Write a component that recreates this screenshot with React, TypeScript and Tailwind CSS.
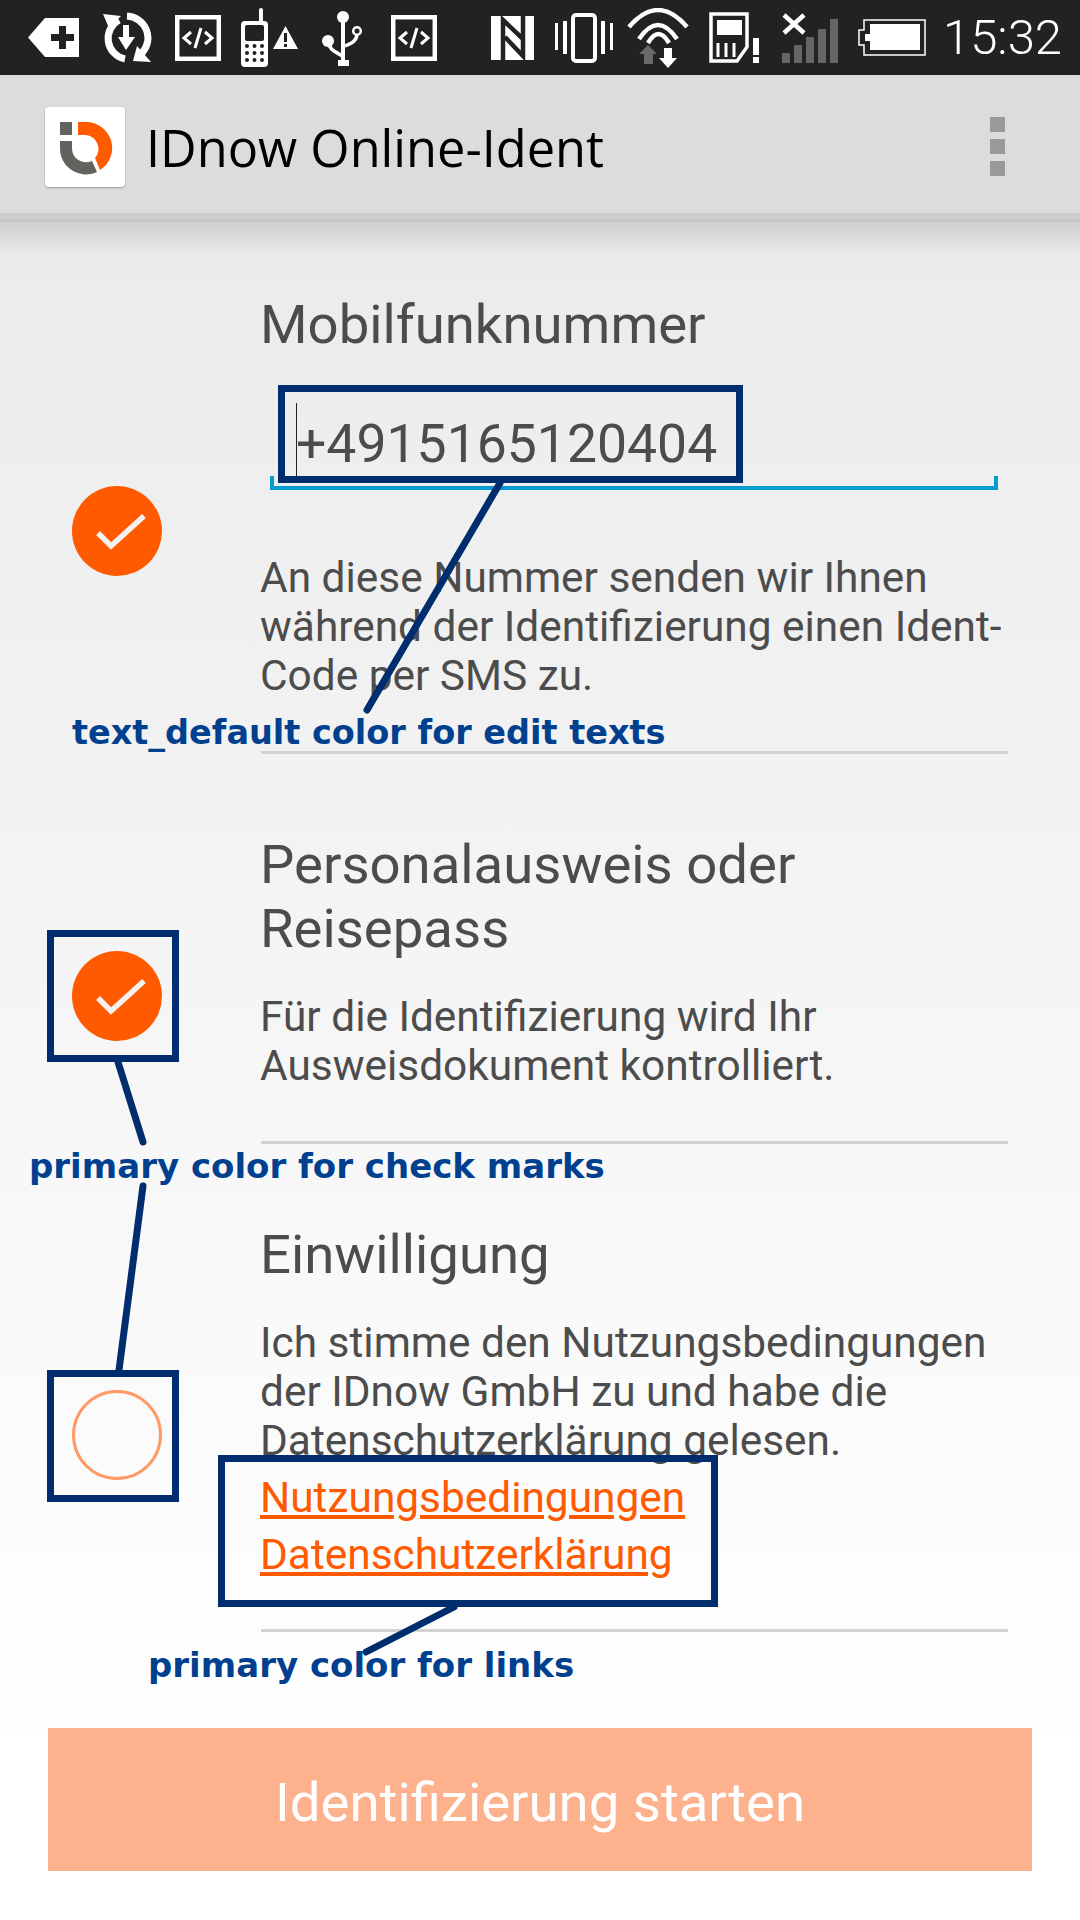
const CheckCircle = () => (
  <div className="w-[90px] h-[90px] rounded-full bg-[#ff5a00]">
    <svg width="90" height="90" viewBox="0 0 90 90" fill="none">
      <path d="M26 47 L39 60 L72 30" stroke="#f5f1ee" strokeWidth="5.5" />
    </svg>
  </div>
)

const CodeBox = ({ className }: { className: string }) => (
  <svg width="46" height="46" viewBox="0 0 46 46" fill="none" stroke="#fff" className={className}>
    <rect x="2.2" y="2.2" width="41.6" height="41.6" strokeWidth="4.5" />
    <path d="M16 17 L9 23 L16 29 M30 17 L37 23 L30 29 M26 13 L20 33" strokeWidth="3" />
  </svg>
)

function StatusBar() {
  return (
    <div className="h-[75px] bg-[#222222] flex items-center shrink-0">
      {/* battery saver tag */}
      <svg width="51" height="39" viewBox="0 0 51 39" className="ml-[28px]">
        <path d="M0 19.5 L17 0 H51 V39 H17 Z" fill="#fff" />
        <path d="M31 8 H38 V16 H46 V23 H38 V31 H31 V23 H23 V16 H31 Z" fill="#222" />
      </svg>
      {/* sync with download arrow */}
      <svg width="52" height="52" viewBox="0 0 52 52" fill="none" className="ml-[21px]">
        <path d="M19 8 A21 21 0 0 0 25 47" stroke="#fff" strokeWidth="7" />
        <path d="M27 4 A22 22 0 0 1 42 41" stroke="#fff" strokeWidth="7" />
        <path d="M3 2 L21 4 L9 16 Z M51 50 L33 49 L37 34 Z" fill="#fff" />
        <path d="M23 13 H29 V25 H35 L26 38 L18 25 H23 Z" fill="#fff" />
      </svg>
      <CodeBox className="ml-[23px]" />
      {/* phone with warning */}
      <svg width="58" height="59" viewBox="0 0 58 59" className="ml-[20px]">
        <rect x="18" y="0" width="4" height="15" rx="2" fill="#fff" />
        <rect x="0" y="13" width="27" height="46" rx="4" fill="#fff" />
        <rect x="4" y="17" width="19" height="16" rx="2" fill="#222" />
        {[38, 45, 52].map(y => [6, 13.5, 21].map(x => <circle key={`${x}-${y}`} cx={x} cy={y} r="2" fill="#222" />))}
        <path d="M32 41 L44.5 18 L57 41 Z" fill="#fff" />
        <rect x="43" y="25" width="3" height="9" fill="#222" />
        <rect x="43" y="36" width="3" height="3" fill="#222" />
      </svg>
      {/* usb */}
      <svg width="41" height="57" viewBox="0 0 41 57" fill="none" className="ml-[23px]">
        <circle cx="21" cy="8" r="6" fill="#fff" />
        <path d="M21 10 V52" stroke="#fff" strokeWidth="4" />
        <rect x="16" y="51" width="11" height="6" fill="#fff" />
        <circle cx="6" cy="32" r="6" fill="#fff" />
        <path d="M6 33 C8 42 15 43 20 47" stroke="#fff" strokeWidth="3.5" />
        <circle cx="35" cy="22" r="3.8" stroke="#fff" strokeWidth="2.5" />
        <path d="M35 26 C34 33 28 35 23 37" stroke="#fff" strokeWidth="3.5" />
      </svg>
      <CodeBox className="ml-[28px]" />
      {/* nfc */}
      <svg width="43" height="44" viewBox="0 0 43 44" className="ml-[54px]">
        <rect width="43" height="44" fill="#fff" />
        <path d="M12 44 V4 L32 23 M14 21 L32 40 V0" fill="none" stroke="#222" strokeWidth="4.5" />
      </svg>
      {/* vibrate */}
      <svg width="58" height="50" viewBox="0 0 58 50" className="ml-[21px]">
        <rect x="0" y="10" width="3" height="27" fill="#fff" />
        <rect x="8" y="8" width="4" height="33" fill="#fff" />
        <rect x="46" y="8" width="4" height="33" fill="#fff" />
        <rect x="55" y="10" width="3" height="27" fill="#fff" />
        <rect x="18" y="2" width="22" height="46" rx="3" fill="none" stroke="#fff" strokeWidth="4" />
      </svg>
      {/* wifi */}
      <svg width="63" height="60" viewBox="0 0 63 60" fill="none" className="ml-[14px]">
        <path d="M2 19 Q31 -15 60 19" stroke="#fff" strokeWidth="4.5" />
        <path d="M12 31 Q31 3 50 31" stroke="#fff" strokeWidth="4.5" />
        <path d="M21 35 Q31.5 17 42 35" stroke="#fff" strokeWidth="4.5" />
        <path d="M21 37 L30 46 H26 V56 H17 V46 H12 Z" fill="#6a6a6a" />
        <path d="M37 40 H45 V50 H50 L41 60 L32 50 H37 Z" fill="#fff" />
      </svg>
      {/* sim card */}
      <svg width="51" height="52" viewBox="0 0 51 52" fill="none" className="ml-[19px]">
        <path d="M2 2 H38 V35 L28 49 H2 Z" stroke="#fff" strokeWidth="3.5" />
        <rect x="8" y="8" width="25" height="15" fill="#fff" />
        <path d="M9 31 V45 M17 31 V45 M25 31 V45" stroke="#fff" strokeWidth="3" />
        <rect x="44" y="26" width="6" height="17" fill="#fff" />
        <rect x="44" y="45" width="6" height="6" fill="#fff" />
      </svg>
      {/* signal */}
      <svg width="56" height="50" viewBox="0 0 56 50" className="ml-[22px]">
        <path d="M2 2 L22 20 M22 2 L2 20" stroke="#fff" strokeWidth="4.5" />
        <rect x="0" y="40" width="8" height="10" fill="#666" />
        <rect x="12" y="32" width="8" height="18" fill="#666" />
        <rect x="24" y="24" width="8" height="26" fill="#666" />
        <rect x="36" y="16" width="8" height="34" fill="#666" />
        <rect x="48" y="6" width="8" height="44" fill="#666" />
      </svg>
      {/* battery */}
      <svg width="68" height="37" viewBox="0 0 68 37" fill="none" className="ml-[20px]">
        <path d="M6 1 H67 V36 H6 V26 H1 V11 H6 Z" stroke="#fff" strokeWidth="1.5" />
        <path d="M12 5 H62 V31 H12 V22 H7 V15 H12 Z" fill="#fff" />
      </svg>
      <span className="ml-[17px] text-[49px] leading-none text-white font-['Roboto',sans-serif] font-light">15:32</span>
    </div>
  )
}

function AppBar() {
  return (
    <div className="h-[138px] bg-[#dcdcdc] flex items-center shrink-0 pt-[6px] pl-[45px] pr-[75px]">
      <div className="w-[80px] h-[80px] bg-white rounded-[4px] shadow-[0_1px_2px_rgba(0,0,0,0.3)]">
        <svg width="80" height="80" viewBox="0 0 80 80">
          <rect x="15" y="15" width="12" height="13" fill="#62625e" />
          <path d="M15 34 H27 V41 A14 14 0 0 0 47 54 L52 65 A26 26 0 0 1 15 41 Z" fill="#62625e" />
          <path d="M33 15 H41 A26 26 0 0 1 55 63 L50 51 A14 14 0 0 0 41 28 H33 Z" fill="#ff5a00" />
        </svg>
      </div>
      <h1 className="ml-[21px] mt-[2px] text-[50.5px] leading-none text-black font-['Open_Sans',sans-serif]">IDnow Online-Ident</h1>
      <div className="ml-auto -mt-[2px] flex flex-col gap-[7px]">
        <div className="w-[15px] h-[15px] bg-[#999999]" />
        <div className="w-[15px] h-[15px] bg-[#999999]" />
        <div className="w-[15px] h-[15px] bg-[#999999]" />
      </div>
    </div>
  )
}

const Divider = () => <div className="h-[3px] bg-[#d2d2d2] w-[747px] ml-px" />

export default function App() {
  return (
    <div className="relative w-[1080px] h-[1920px] overflow-hidden bg-white text-[#4c4c4c] font-['Roboto',sans-serif]">
      <div className="h-[1920px] flex flex-col">
        <StatusBar />
        <AppBar />
        <div className="flex-1 bg-gradient-to-b from-[#ebebeb] to-[#ffffff] to-[90%] relative">
          {/* action bar shadow */}
          <div className="h-[9px] bg-[#cdcdcd] border-b-[3px] border-[#c6c6c6]" />
          <div className="h-[33px] -mb-[33px] bg-gradient-to-b from-[#cfcfcf] to-transparent" />

          {/* phone number */}
          <section className="flex pt-[70px]">
            <div className="w-[260px] shrink-0 pl-[72px] pt-[194px]">
              <CheckCircle />
            </div>
            <div className="w-[748px]">
              <h2 className="text-[54.5px] leading-[64px]">Mobilfunknummer</h2>
              <div className="ml-[10px] mt-[46px] w-[728px] h-[88px] border-b-4 border-[#069bd0] relative flex items-center">
                <span className="absolute left-0 -bottom-[4px] w-[4px] h-[14px] bg-[#069bd0]" />
                <span className="absolute right-0 -bottom-[4px] w-[4px] h-[14px] bg-[#069bd0]" />
                <span className="absolute left-[26px] top-[1px] w-[1px] h-[73px] bg-[#222]" />
                <span className="ml-[26px] text-[53.5px] leading-none">+4915165120404</span>
              </div>
              <p className="mt-[63px] text-[42.4px] leading-[49px]">
                An diese Nummer senden wir Ihnen<br />während der Identifizierung einen Ident-<br />Code per SMS zu.
              </p>
              <div className="mt-[51px]"><Divider /></div>
            </div>
          </section>

          {/* id document */}
          <section className="flex pt-[78px]">
            <div className="w-[260px] shrink-0 pl-[72px] pt-[119px]">
              <CheckCircle />
            </div>
            <div className="w-[748px]">
              <h2 className="text-[54.5px] leading-[64px]">Personalausweis oder<br />Reisepass</h2>
              <p className="mt-[32px] text-[42.4px] leading-[49px]">
                Für die Identifizierung wird Ihr<br />Ausweisdokument kontrolliert.
              </p>
              <div className="mt-[51px]"><Divider /></div>
            </div>
          </section>

          {/* consent */}
          <section className="flex pt-[78px]">
            <div className="w-[260px] shrink-0 pl-[72px] pt-[168px]">
              <div className="w-[90px] h-[90px] rounded-full border-[3px] border-[#ff9a66]" />
            </div>
            <div className="w-[748px]">
              <h2 className="text-[54.5px] leading-[64px]">Einwilligung</h2>
              <p className="mt-[32px] text-[42.4px] leading-[49px]">
                Ich stimme den Nutzungsbedingungen<br />der IDnow GmbH zu und habe die<br />Datenschutzerklärung gelesen.
              </p>
              <div className="text-[42.4px] leading-[57px] text-[#ff5a00] underline mt-[4px]">
                <div>Nutzungsbedingungen</div>
                <div>Datenschutzerklärung</div>
              </div>
              <div className="mt-[46px]"><Divider /></div>
            </div>
          </section>

          <button className="mt-[96px] ml-[48px] w-[984px] h-[143px] pt-[5px] bg-[#fdb18c] text-white text-[54.5px] leading-none">
            Identifizierung starten
          </button>
        </div>
      </div>

      {/* annotations drawn on top of the screenshot */}
      <svg width="1080" height="1920" viewBox="0 0 1080 1920" fill="none" className="absolute inset-0" stroke="#002d6e" strokeWidth="7" strokeLinecap="round">
        <path d="M500 483 L367 710" />
        <path d="M118 1062 L143 1142" />
        <path d="M143 1186 L119 1370" />
        <path d="M454 1607 L366 1652" />
      </svg>
      <div className="absolute left-[278px] top-[385px] w-[465px] h-[98px] border-[7px] border-[#002d6e]" />
      <div className="absolute left-[47px] top-[930px] w-[132px] h-[132px] border-[7px] border-[#002d6e]" />
      <div className="absolute left-[47px] top-[1370px] w-[132px] h-[132px] border-[7px] border-[#002d6e]" />
      <div className="absolute left-[218px] top-[1455px] w-[500px] h-[152px] border-[7px] border-[#002d6e]" />
      <span className="absolute left-[72px] top-[712px] text-[33.5px] leading-[42px] font-bold text-[#00408f] font-['DejaVu_Sans',sans-serif]">text_default color for edit texts</span>
      <span className="absolute left-[29px] top-[1145px] text-[34px] leading-[42px] font-bold text-[#00408f] font-['DejaVu_Sans',sans-serif]">primary color for check marks</span>
      <span className="absolute left-[148px] top-[1644px] text-[34px] leading-[42px] font-bold text-[#00408f] font-['DejaVu_Sans',sans-serif]">primary color for links</span>
    </div>
  )
}
